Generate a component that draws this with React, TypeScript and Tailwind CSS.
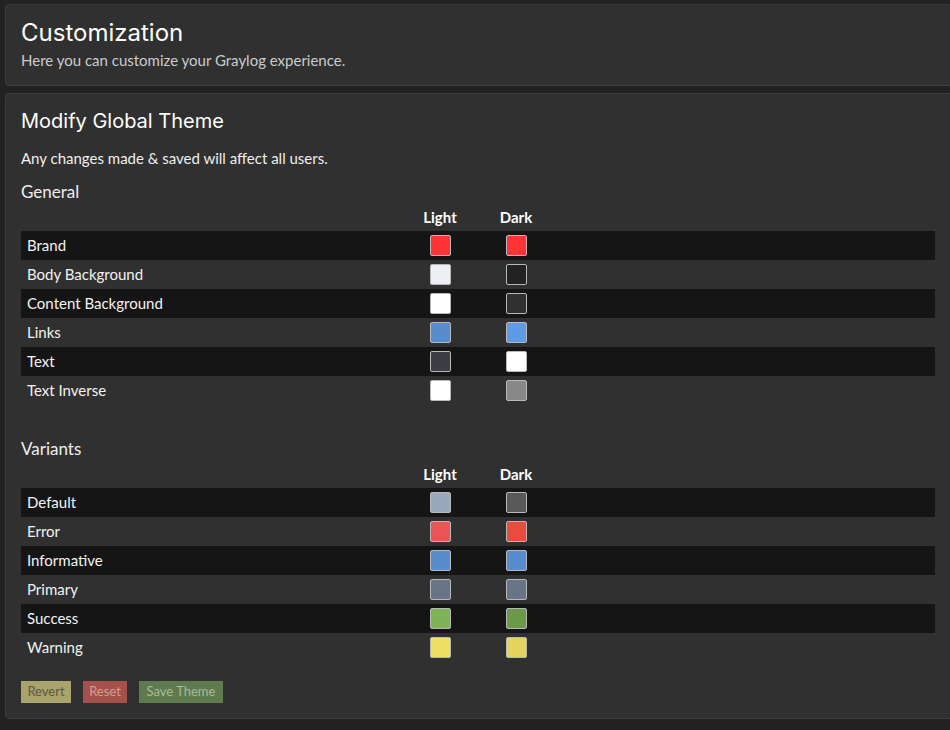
import React from "react";

type Row = { name: string; light: string; dark: string };

const general: Row[] = [
  { name: "Brand", light: "#ff3333", dark: "#ff3333" },
  { name: "Body Background", light: "#eeeff2", dark: "#222222" },
  { name: "Content Background", light: "#ffffff", dark: "#303030" },
  { name: "Links", light: "#578dcc", dark: "#5e9be4" },
  { name: "Text", light: "#3c3e45", dark: "#ffffff" },
  { name: "Text Inverse", light: "#ffffff", dark: "#888888" },
];

const variants: Row[] = [
  { name: "Default", light: "#9aa8bd", dark: "#595959" },
  { name: "Error", light: "#eb5454", dark: "#e74c3c" },
  { name: "Informative", light: "#578dcc", dark: "#578dcc" },
  { name: "Primary", light: "#697586", dark: "#697586" },
  { name: "Success", light: "#7eb356", dark: "#6a9a47" },
  { name: "Warning", light: "#eedf64", dark: "#e2d45c" },
];

const body = { fontFamily: "Lato, 'Noto Sans', sans-serif" };
const head = { fontFamily: "Inter, Roboto, sans-serif" };

function Swatch({ color }: { color: string }) {
  return (
    <div
      className="w-[21px] h-[21px] rounded-[2px] border border-[#b8b8b8]"
      style={{ backgroundColor: color }}
    />
  );
}

function Table({ rows }: { rows: Row[] }) {
  return (
    <div className="w-[914px]">
      <div className="flex h-[28px] items-center text-[15px] font-bold text-white">
        <div className="w-[384px]" />
        <div className="w-[70px] text-center">Light</div>
        <div className="w-[82px] text-center">Dark</div>
      </div>
      {rows.map((r, i) => (
        <div
          key={r.name}
          className={`flex h-[29px] items-center text-[15px] text-[#f2f2f2] ${
            i % 2 === 0 ? "bg-[#151515]" : ""
          }`}
        >
          <div className="w-[384px] pl-[6px]">{r.name}</div>
          <div className="w-[70px] flex justify-center">
            <Swatch color={r.light} />
          </div>
          <div className="w-[82px] flex justify-center">
            <Swatch color={r.dark} />
          </div>
        </div>
      ))}
    </div>
  );
}

export default function App() {
  return (
    <div
      className="w-[950px] h-[730px] overflow-hidden bg-[#222222] pt-[4px] pl-[5px]"
      style={body}
    >
      <div className="w-[960px] rounded-[4px] border border-[#3c3c3c] bg-[#303030] px-[15px] pt-[14px] pb-[15px]">
        <h1 className="text-[24px] leading-[28px] text-white" style={head}>
          Customization
        </h1>
        <p className="mt-[3px] text-[15px] leading-[20px] text-[#c9cbce]">
          Here you can customize your Graylog experience.
        </p>
      </div>

      <div className="mt-[7px] w-[960px] rounded-[4px] border border-[#3c3c3c] bg-[#303030] px-[15px] pt-[15px] pb-[15px]">
        <h2 className="text-[20px] leading-[24px] text-white" style={head}>
          Modify Global Theme
        </h2>
        <p className="mt-[15px] text-[15px] leading-[20px] text-[#eeeeee]">
          Any changes made &amp; saved will affect all users.
        </p>
        <h3 className="mt-[13px] text-[17px] leading-[22px] text-[#eeeeee]">General</h3>
        <Table rows={general} />
        <h3 className="mt-[33px] text-[17px] leading-[22px] text-[#eeeeee]">Variants</h3>
        <Table rows={variants} />
        <div className="mt-[19px] flex gap-[12px] text-[13px]">
          <button className="h-[22px] w-[50px] bg-[#a9a36c] text-[#5c5843]">Revert</button>
          <button className="h-[22px] w-[44px] bg-[#a4514b] text-[#d59e99]">Reset</button>
          <button className="h-[22px] w-[84px] bg-[#5f7a4f] text-[#a8b99e]">Save Theme</button>
        </div>
      </div>
    </div>
  );
}
